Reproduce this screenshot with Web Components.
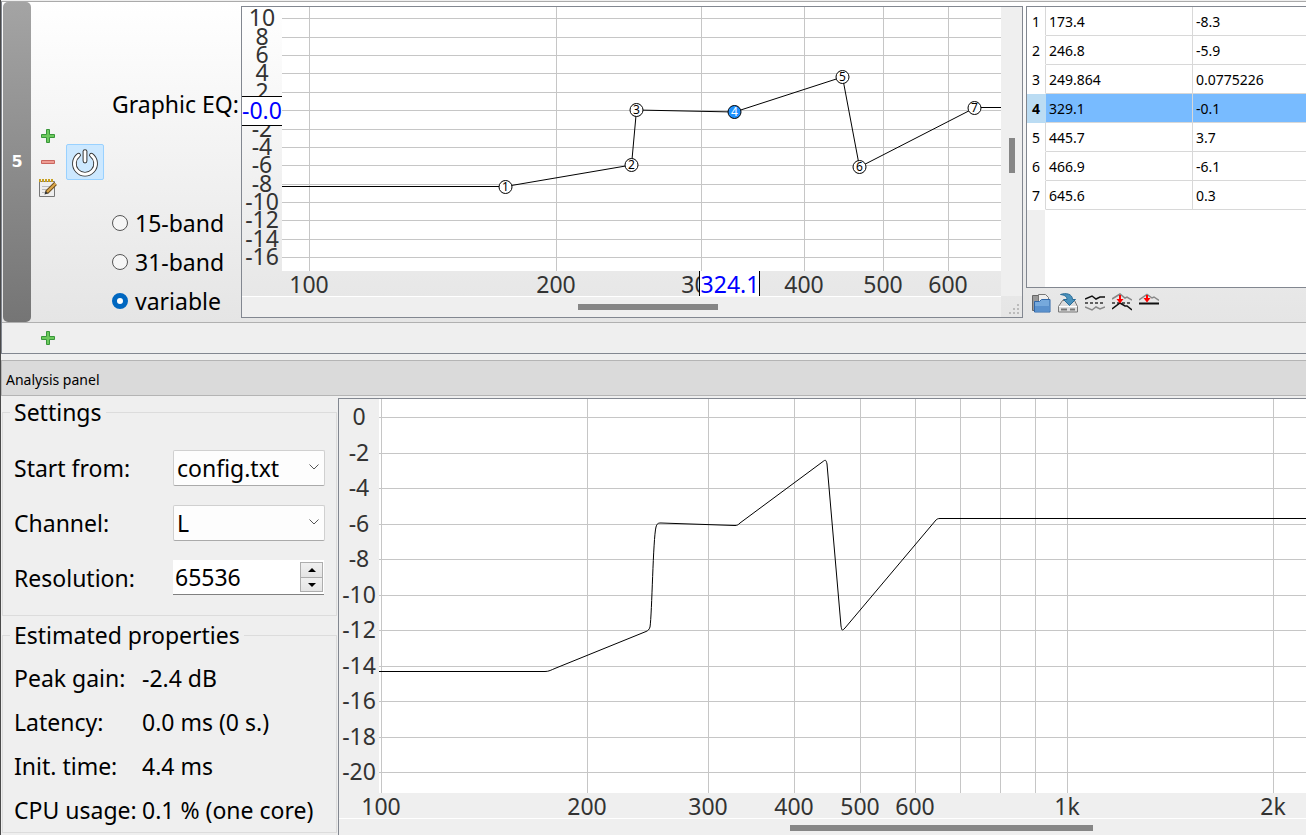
<!DOCTYPE html>
<html lang="en">
<head>
<meta charset="utf-8">
<title>Equalizer configuration</title>
<style>
  html, body { height: 100%; }
  body { margin: 0; background: #efefef; color: #000; font: 23px/32px "Noto Sans", sans-serif; overflow: hidden; }
</style>
</head>
<body>
<eq-window></eq-window>

<template id="t-window">
  <style>
    :host { display: flex; flex-direction: column; box-sizing: border-box; height: 100vh; border-left: 1px solid #4a4a4a; padding-top: 1px; overflow: hidden; }
    analysis-panel { flex: 1; min-height: 0; margin-top: 6px; }
  </style>
  <filter-list></filter-list>
  <analysis-panel></analysis-panel>
</template>

<template id="t-filters">
  <style>
    :host { display: block; border: 1px solid #828790; border-top-color: #aaa; border-right: 0; }
    .add { display: flex; height: 30px; padding-left: 34px; align-items: center; border-top: 1px solid #b0b0b0; }
  </style>
  <filter-row></filter-row>
  <div class="add"><icon-button name="plus" label="Add filter"></icon-button></div>
</template>

<template id="t-filter">
  <style>
    :host { display: flex; background: linear-gradient(#fff, #f2f2f2 50%, #e5e5e5); }
    .handle { display: flex; align-items: center; justify-content: center; width: 28px; margin-left: 1px; flex: none; border-radius: 5px;
      background: linear-gradient(#a4a4a4, #757575); color: #fff; font: bold 16px/20px "DejaVu Sans", sans-serif; }
    .tools { display: flex; flex-direction: column; justify-content: center; gap: 6px; width: 34px; flex: none; align-items: center; }
    .power { align-self: center; flex: none; width: 38px; height: 36px; padding: 0; margin-left: 1px; background: #cce8ff; border: 1px solid #99d1ff; border-radius: 2px; }
    .power svg { display: block; margin: auto; }
    .mode { display: flex; flex-direction: column; box-sizing: border-box; width: 137px; flex: none; padding: 86px 0 2px 8px; margin: 0; white-space: nowrap; }
    .title { height: 32px; margin-bottom: 83px; }
    label { display: flex; align-items: center; height: 39px; gap: 7px; }
    input { appearance: none; box-sizing: border-box; width: 16px; height: 16px; margin: 0; border: 1px solid #555; border-radius: 50%; background: #f6f6f6; }
    input:checked { border: 5px solid #0067c0; background: #fff; }
    eq-plot { flex: 1; min-width: 0; margin: 4px 3px 4px 0; }
    .points { flex: 0 0 280px; min-width: 0; display: flex; flex-direction: column; padding-top: 4px; }
    points-table { flex: 1; }
    .bar { display: flex; gap: 3px; padding: 2px 0 6px 3px; height: 26px; align-items: center; }
  </style>
  <div class="handle">5</div>
  <div class="tools">
    <icon-button name="plus" label="Add"></icon-button>
    <icon-button name="minus" label="Remove"></icon-button>
    <icon-button name="edit" label="Edit"></icon-button>
  </div>
  <button class="power" aria-label="Power" aria-pressed="true">
    <svg width="30" height="30" viewBox="0 0 30 30" fill="none" stroke-linecap="round">
      <path d="M8.6 8.2A10.6 10.6 0 1 0 21.4 8.2" stroke="#333" stroke-width="4.6"/>
      <path d="M15 4.6V14" stroke="#333" stroke-width="4.8"/>
      <path d="M8.6 8.2A10.6 10.6 0 1 0 21.4 8.2" stroke="#fff" stroke-width="2.8"/>
      <path d="M15 4.6V14" stroke="#fff" stroke-width="2.8"/>
    </svg>
  </button>
  <div class="mode" role="radiogroup" aria-labelledby="ttl">
    <div class="title" id="ttl">Graphic EQ:</div>
    <label><input type="radio" name="band">15-band</label>
    <label><input type="radio" name="band">31-band</label>
    <label><input type="radio" name="band" checked>variable</label>
  </div>
  <eq-plot kind="filter"></eq-plot>
  <div class="points">
    <points-table></points-table>
    <div class="bar">
      <icon-button name="open" label="Import"></icon-button>
      <icon-button name="save" label="Export"></icon-button>
      <icon-button name="invert" label="Invert"></icon-button>
      <icon-button name="normalize" label="Normalize"></icon-button>
      <icon-button name="reset" label="Reset"></icon-button>
    </div>
  </div>
</template>

<template id="t-table">
  <style>
    :host { display: block; border: 1px solid #828790; border-right: 0; background: linear-gradient(90deg, #efefef 18px, #fff 18px); }
    table { border-collapse: separate; border-spacing: 0; table-layout: fixed; width: 100%; font-size: 14px; line-height: 20px; }
    th, td { box-sizing: border-box; height: 29px; padding: 1px 3px 0; text-align: left; border-bottom: 1px solid #d8d8d8; background: #fff; }
    th { width: 19px; padding: 2px 0 0; text-align: center; font-weight: normal; border-right: 1px solid #d8d8d8; border-bottom-color: #fff; }
    td { border-right: 1px solid #d8d8d8; }
    td:nth-child(2) { width: 147px; }
    td:last-child { border-right: 0; }
    .on td { background: #78bbff; }
    .on th { background: #bbdcf3; border-color: #bbdcf3; font-weight: bold; }
  </style>
  <table><tbody></tbody></table>
</template>

<template id="t-plot">
  <style>
    :host { display: grid; grid-template-columns: 40px minmax(0, 1fr); grid-template-rows: minmax(264px, 1fr) 25px 21px; border: 1px solid #828790; font-size: 23px; line-height: 24px; overflow: hidden; }
    :host([kind="filter"]) { grid-template-columns: 40px minmax(0, 1fr) 21px; }
    :host([kind="analysis"]) { grid-template-rows: minmax(264px, 1fr) 25px 17px; border-right: 0; border-bottom: 0; }
    svg { display: block; width: 100%; height: 100%; overflow: visible; }
    .plot { background: #fff; grid-area: 1 / 2; min-height: 0; overflow: hidden; }
    .db { grid-area: 1 / 1; min-height: 0; }
    .hz { grid-area: 2 / 2; }
    .hbar { grid-area: 3 / 1 / 4 / 3; background: #efefef; border-top: 1px solid #fff; display: flex; align-items: center; }
    .vbar { grid-area: 1 / 3 / 3 / 4; background: #efefef; display: flex; justify-content: center; }
    .grip { grid-area: 3 / 3; display: flex; align-items: end; justify-content: end; }
    .grip svg { width: 14px; height: 14px; }
    .thumb { background: #868686; }
    .hbar .thumb { height: 6px; width: 140px; margin-left: 336px; }
    .vbar .thumb { width: 6px; height: 35px; margin-top: 131px; }
    :host([kind="analysis"]) .hbar .thumb { width: 303px; margin: 2px 0 0 451px; }
    :host([kind="analysis"]) .vbar, :host([kind="analysis"]) .grip { display: none; }
    text { fill: #333; text-anchor: middle; }
    .cur { fill: #00f; }
    .num { font-size: 12px; fill: #000; }
    .num.on { fill: #fff; }
    .grid { stroke: #c6c6c6; shape-rendering: crispEdges; }
    .curve { fill: none; stroke: #000; stroke-width: 1; }
  </style>
  <div class="db"></div>
  <div class="plot"></div>
  <div class="hz"></div>
  <div class="vbar"><div class="thumb"></div></div>
  <div class="hbar"><div class="thumb"></div></div>
  <div class="grip"><svg viewBox="0 0 14 14" fill="#bbb"><path d="M9 1h2v2H9zM5 5h2v2H5zM9 5h2v2H9zM1 9h2v2H1zM5 9h2v2H5zM9 9h2v2H9z"/></svg></div>
</template>

<template id="t-analysis">
  <style>
    :host { display: flex; flex-direction: column; }
    h2 { margin: 0; padding: 2px 4px 0; height: 32px; font-weight: normal; font-size: 14px; line-height: 34px; background: #dadada; border: 1px solid #b4b4b4; border-right: 0; }
    .body { flex: 1; display: flex; min-height: 0; }
    .side { flex: 0 0 337px; min-width: 0; display: flex; flex-direction: column; }
    eq-plot { flex: 1; min-width: 0; margin-top: 2px; }
    .row { display: flex; align-items: center; height: 55px; }
    .row label { width: 159px; }
    .pick { position: relative; width: 152px; }
    select { appearance: none; box-sizing: border-box; display: block; width: 100%; height: 36px; padding: 0 3px; font: inherit; line-height: 32px; color: #000; background: #fdfdfd; border: 1px solid #d0d0d0; border-bottom-color: #aaa; border-radius: 2px; }
    .pick svg { position: absolute; right: 6px; top: 13px; pointer-events: none; }
    .spin { display: flex; box-sizing: border-box; width: 151px; height: 35px; background: #fff; border-bottom: 1px solid #808080; }
    .spin input { flex: 1; min-width: 0; border: 0; padding: 0 2px; font: inherit; background: none; }
    .steps { display: grid; grid-template-rows: 1fr 1fr; width: 23px; margin: 2px 1px; border: 1px solid #adadad; box-sizing: border-box; }
    .steps button { padding: 0; border: 0; background: linear-gradient(#f0f0f0, #e4e4e4); display: flex; align-items: center; justify-content: center; }
    .steps button + button { border-top: 1px solid #adadad; }
    dl { display: grid; grid-template-columns: 128px auto; grid-auto-rows: 44px; align-items: center; margin: 0; padding-top: 5px; white-space: nowrap; }
    dd { margin: 0; }
    .set { padding: 12px 0 10px; }
  </style>
  <h2>Analysis panel</h2>
  <div class="body">
    <div class="side">
      <group-box><span slot="legend">Settings</span>
        <div class="set">
          <div class="row"><label for="start">Start from:</label>
            <div class="pick"><select id="start"><option>config.txt</option></select><svg width="10" height="8" fill="none" stroke="#555"><path d="M.5 1.5L5 6L9.500 1.500"/></svg></div></div>
          <div class="row"><label for="chan">Channel:</label>
            <div class="pick"><select id="chan"><option>L</option></select><svg width="10" height="8" fill="none" stroke="#555"><path d="M.5 1.5L5 6L9.500 1.500"/></svg></div></div>
          <div class="row"><label for="res">Resolution:</label>
            <div class="spin"><input id="res" value="65536"><span class="steps">
              <button aria-label="Increase"><svg width="8" height="4"><path d="M0 4L4 0L8 4z"/></svg></button>
              <button aria-label="Decrease"><svg width="8" height="4"><path d="M0 0L4 4L8 0z"/></svg></button></span></div></div>
        </div>
      </group-box>
      <group-box><span slot="legend">Estimated properties</span>
        <dl>
          <dt>Peak gain:</dt><dd>-2.4 dB</dd>
          <dt>Latency:</dt><dd>0.0 ms (0 s.)</dd>
          <dt>Init. time:</dt><dd>4.4 ms</dd>
          <dt>CPU usage:</dt><dd>0.1 % (one core)</dd>
        </dl>
      </group-box>
    </div>
    <eq-plot kind="analysis"></eq-plot>
  </div>
</template>

<template id="t-group">
  <style>
    :host { display: block; padding: 0 1px; margin-bottom: 3px; }
    fieldset { margin: 0; padding: 0 11px; border: 1px solid #dcdcdc; min-width: 0; }
    legend { padding: 0 4px; margin-left: -4px; line-height: 32px; }
  </style>
  <fieldset><legend><slot name="legend"></slot></legend><slot></slot></fieldset>
</template>

<script>
const cloneInto = (host, id) => {
  host.attachShadow({ mode: 'open' }).append(document.getElementById(id).content.cloneNode(true));
  return host.shadowRoot;
};

const simple = (name, id) => customElements.define(name, class extends HTMLElement {
  constructor() { super(); cloneInto(this, id); }
});

const ICONS = {
  plus: [16, '<path d="M6.500 1.500h3v5h5v3h-5v5h-3v-5h-5v-3h5z" fill="#6cc95c" stroke="#38963a"/>'],
  minus: [16, '<path d="M1.500 6.500h13v3h-13z" fill="#ee9c93" stroke="#c9655e"/>'],
  edit: [20, '<path d="M1.500 3.500h15v15h-15z" fill="#eee" stroke="#777"/><path d="M4 8.500h9M4 11.500h8M4 14.500h5" stroke="#bbb"/><path d="M1 2.500h15" stroke="#c8a020" stroke-width="3" stroke-dasharray="2 1"/><path d="M8.500 14.500L17.500 5.500" stroke="#70501f" stroke-width="4"/><path d="M9 14L17.500 5.500" stroke="#dda94c" stroke-width="2"/><path d="M6.500 16.500L7.500 13L10 15.500z" fill="#333"/>'],
  open: [20, '<path d="M1.500 2.500h6l1 2h8v13h-15z" fill="#999" stroke="#666"/><path d="M7.500 1.500h7l3 3v8h-10z" fill="#eee" stroke="#777"/><path d="M3.500 8.500h5l2-2h8.500v12.500h-15.500z" fill="#76a9dc" stroke="#2f66a8"/><path d="M4 13h14.500v5.500h-14.500z" fill="#5a91cd"/>'],
  save: [20, '<path d="M4.500 7.500h12l3 6v5.500h-19v-5.500z" fill="#ddd" stroke="#777"/><path d="M1 13.500h18" stroke="#fff"/><path d="M3 16.500h6M12 16.500h5" stroke="#777" stroke-width="2"/><path d="M2.500 1.500C8-.5 14.500 1 14.500 6.500h3L11.500 12.500L5.500 6.500h3.500C9 3.500 6.500 2 2.500 1.500z" fill="#4a92bd" stroke="#286a96"/>'],
  invert: [20, '<path d="M0 6L7 3L11 6L15 4L20 4" stroke="#111" stroke-width="1.500" fill="none"/><path d="M0 10h20" stroke="#333" stroke-width="1.500" stroke-dasharray="3 2"/><path d="M0 14L7 17L11 14L15 16L20 14" stroke="#888" fill="none" stroke-width="1.500"/>'],
  normalize: [20, '<path d="M0 6L8 1L13 5L15 4L20 7" stroke="#888" fill="none" stroke-width="1.500"/><path d="M0 10h20" stroke="#333" stroke-width="1.500" stroke-dasharray="3 2"/><path d="M0 16L8 10L13 13L15 13L20 17" stroke="#111" fill="none" stroke-width="1.500"/><path d="M7 2h2v4h2.500L8 10.500L4.500 6h2.500z" fill="#f00"/>'],
  reset: [20, '<path d="M0 7L8 1.500L13 5L15 4L20 7.500" stroke="#888" fill="none" stroke-width="1.500"/><path d="M0 10.500h20" stroke="#111" stroke-width="2"/><path d="M7 2h2v3h2.500L8 9.500L4.500 5h2.500z" fill="#f00"/>']
};

customElements.define('icon-button', class extends HTMLElement {
  connectedCallback() {
    if (this.shadowRoot) return;
    const [size, art] = ICONS[this.getAttribute('name')];
    this.attachShadow({ mode: 'open' }).innerHTML = `
      <style>
        :host { display: inline-flex; }
        button { width: 24px; height: 20px; padding: 0; border: 0; background: none; display: flex; align-items: center; justify-content: center; }
        svg { flex: none; display: block; }
      </style>
      <button aria-label="${this.getAttribute('label')}"><svg width="${size}" height="${size}" viewBox="0 0 ${size} ${size}">${art}</svg></button>`;
  }
});

const POINTS = [
  ['173.4', '-8.3'], ['246.8', '-5.9'], ['249.864', '0.0775226'], ['329.1', '-0.1'],
  ['445.7', '3.7'], ['466.9', '-6.1'], ['645.6', '0.3']
];
const SELECTED = 3;

customElements.define('points-table', class extends HTMLElement {
  constructor() {
    super();
    cloneInto(this, 't-table').querySelector('tbody').innerHTML = POINTS.map(([f, g], i) =>
      `<tr class="${i === SELECTED ? 'on' : ''}"><th scope="row">${i + 1}</th><td>${f}</td><td>${g}</td></tr>`).join('');
  }
});

// Geometry of the two plots: position of 100 Hz, pixels per octave, position of 0 dB, pixels per dB.
const PLOTS = {
  filter: { x0: 27, octave: 247.3, y0: 103.2, perDb: 9.18, top: 10, bottom: -16, lines: [100, 200, 300, 400, 500, 600], labels: [100, 200, 300, 400, 500, 600] },
  analysis: { x0: 2, octave: 206.4, y0: 18, perDb: 17.76, top: 0, bottom: -20,
    lines: [100, 200, 300, 400, 500, 600, 700, 800, 900, 1000, 2000], labels: [100, 200, 300, 400, 500, 600, 1000, 2000] }
};

customElements.define('eq-plot', class extends HTMLElement {
  connectedCallback() {
    if (this.shadowRoot) return;
    const root = cloneInto(this, 't-plot');
    const kind = this.getAttribute('kind');
    const p = PLOTS[kind];
    const x = f => p.x0 + p.octave * Math.log2(f / 100);
    const y = g => p.y0 - p.perDb * g;
    const levels = [];
    for (let g = p.top; g >= p.bottom; g -= 2) levels.push(g);
    const px = v => Math.round(v) + 0.5;

    let plot = '<g class="grid">' +
      levels.map(g => `<line x1="0" x2="100%" y1="${px(y(g))}" y2="${px(y(g))}"/>`).join('') +
      p.lines.map(f => `<line y1="0" y2="100%" x1="${px(x(f))}" x2="${px(x(f))}"/>`).join('') + '</g>';
    let db = levels.map(g => `<text x="20" y="${Math.round(y(g)) + 8}">${g}</text>`).join('');
    let hz = p.labels.map(f => `<text x="${Math.round(x(f))}" y="22">${f >= 1000 ? f / 1000 + 'k' : f}</text>`).join('');

    if (kind === 'filter') {
      const pts = POINTS.map(([f, g]) => [Math.round(x(f)) + 0.5, Math.round(y(g)) + 1]);
      const last = Math.floor(pts[pts.length - 1][1]) - 0.5;
      plot += `<polyline class="curve" points="0,${pts[0][1] - 0.5} ${pts[0][0]},${pts[0][1] - 0.5} ${pts.slice(1).join(' ')}"/>` +
        `<path class="curve" d="M${pts[pts.length - 1][0]} ${last}H4000"/>` +
        pts.map(([a, b], i) => `<circle cx="${a}" cy="${b}" r="6.500" fill="${i === SELECTED ? '#1e90ff' : '#fff'}" stroke="#000"/>` +
          `<text class="num${i === SELECTED ? ' on' : ''}" x="${a}" y="${b + 4}">${i + 1}</text>`).join('');
      db += '<rect x="0" y="89" width="40" height="30" fill="#000"/><rect x="0" y="90" width="40" height="28" fill="#fff"/><text class="cur" x="20" y="112">-0.0</text>';
      hz += '<rect x="417" y="0" width="61" height="25" fill="#000"/><rect x="418" y="0" width="59" height="25" fill="#fff"/><text class="cur" x="448" y="22">324.1</text>';
    } else {
      plot += '<path class="curve" d="M0 272.500H166C170 272.500 172 271 177 269L267 232.500C269 231.500 270 231 271 228C273 215 274 140 277 128C278 124.500 279 124 282 124L356 126.500C358 126.500 359 126 361 124L444 62.500C446 61 447 60 448 65L462 227C463 232 463 232 466 229L557 121C558 120 559 119.500 561 119.500H4000"/>';
    }
    root.querySelector('.plot').innerHTML = `<svg>${plot}</svg>`;
    root.querySelector('.db').innerHTML = `<svg>${db}</svg>`;
    root.querySelector('.hz').innerHTML = `<svg>${hz}</svg>`;
  }
});

simple('group-box', 't-group');
simple('analysis-panel', 't-analysis');
simple('filter-row', 't-filter');
simple('filter-list', 't-filters');
simple('eq-window', 't-window');
</script>
</body>
</html>
